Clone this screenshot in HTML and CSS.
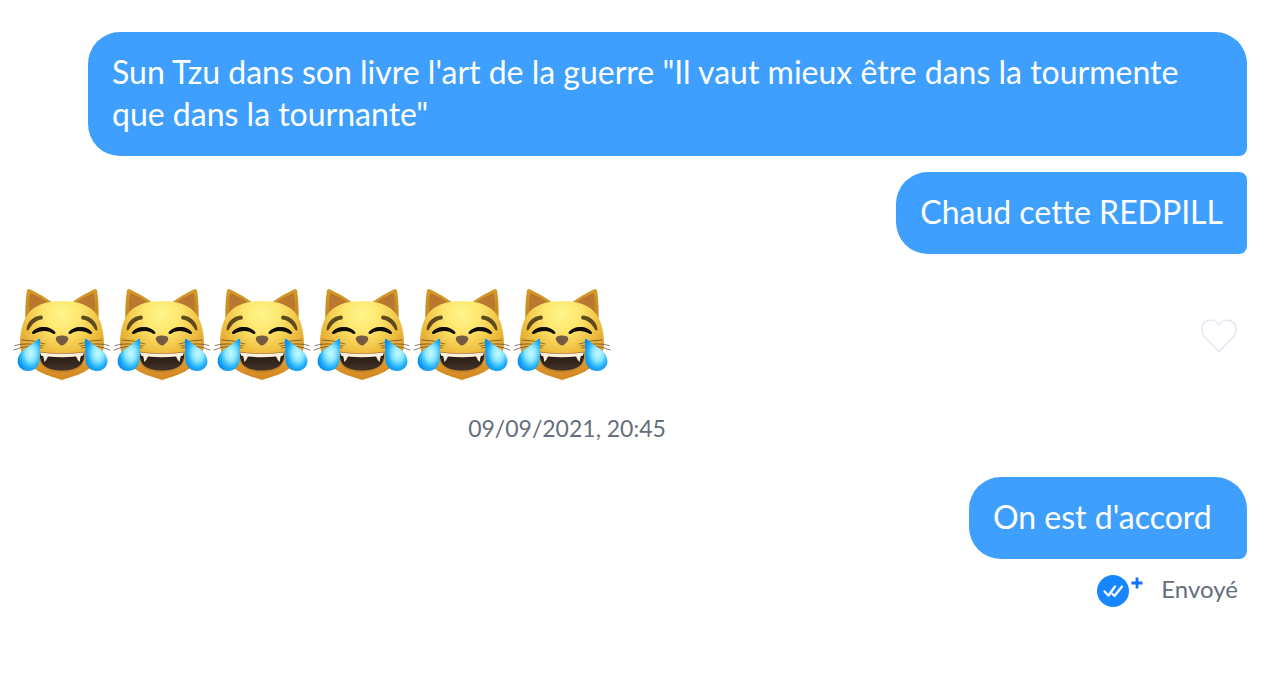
FILE: index.html
```html
<!DOCTYPE html>
<html lang="fr">
<head>
<meta charset="utf-8">
<meta name="viewport" content="width=device-width, initial-scale=1">
<title>Conversation</title>
<link rel="stylesheet" href="styles.css">
</head>
<body>
<svg class="sprite" aria-hidden="true">
  <defs>
    <radialGradient id="fur" gradientUnits="userSpaceOnUse" cx="50" cy="30" r="62">
      <stop offset="0" stop-color="#fff68c"/>
      <stop offset=".3" stop-color="#fde66c"/>
      <stop offset=".65" stop-color="#edba3c"/>
      <stop offset="1" stop-color="#d68a24"/>
    </radialGradient>
    <linearGradient id="ear" x1="0" y1="0" x2="0" y2="1">
      <stop offset="0" stop-color="#d39a28"/>
      <stop offset="1" stop-color="#c08420"/>
    </linearGradient>
    <radialGradient id="tear" cx=".58" cy=".45" r=".6">
      <stop offset="0" stop-color="#c8fbff"/>
      <stop offset=".4" stop-color="#8ae6ff"/>
      <stop offset=".75" stop-color="#22b0fa"/>
      <stop offset="1" stop-color="#0a90f2"/>
    </radialGradient>
    <linearGradient id="mouth" x1="0" y1="0" x2="0" y2="1">
      <stop offset="0" stop-color="#21170f"/>
      <stop offset="1" stop-color="#43332a"/>
    </linearGradient>
    <symbol id="cat" viewBox="0 0 100 100">
      <path fill="url(#ear)" d="M13.500 36C13 23 14 12 15 6.500Q15.500 4 18.500 5.500Q30 11 41 19L25 38ZM86.500 36C87 23 86 12 85 6.500Q84.500 4 81.500 5.500Q70 11 59 19L75 38Z"/>
      <path fill="#b97730" d="M18 34C16.500 22 17 13 18.500 9Q28 13 38 20L24 37ZM82 34C83.500 22 83 13 81.500 9Q72 13 62 20L76 37Z"/>
      <path fill="url(#fur)" d="M50 17C66 17 78 21 85 31C90 39 92 50 92 60C92 73 83 82 72 88C64 92 56 94 50 96C44 94 36 92 28 88C17 82 8 73 8 60C8 50 10 39 15 31C22 21 34 17 50 17Z"/>
      <path fill="#5d4b1e" d="M14.500 45.500C15 38 21 32 29.500 31.500Q32 33 30 35.500C24 36 20 40 17 45.500Q15 47.500 14.500 45.500ZM85.500 45.500C85 38 79 32 70.500 31.500Q68 33 70 35.500C76 36 80 40 83 45.500Q85 47.500 85.500 45.500Z"/>
      <path fill="#100d08" d="M20 48.500C24 41 39 41 43.500 48.500Q43.500 50.500 41.500 50C36 45.500 28 46.500 22 50Q19.500 50.500 20 48.500ZM56.500 48.500C61 41 76 41 80 48.500Q80.500 50.500 78 50C72 46.500 64 45.500 58.500 50Q56.500 50.500 56.500 48.500Z"/>
      <path fill="#765b42" d="M45 52.500Q50 50.500 55 52.500Q58 55 54 59Q51.500 61.500 50 61.500Q48.500 61.500 46 59Q42 55 45 52.500Z"/>
      <path fill="#c48426" d="M27 67.500Q50 71 73 67.500C74 84 64 88.500 50 88.500S26 84 27 67.500Z"/>
      <path fill="url(#mouth)" d="M28 68.500Q50 71 72 68.500C73 82 64 86.500 50 86.500S27 82 28 68.500Z"/>
      <path fill="#fff0dc" d="M28 68.500Q50 71 72 68.500L71 71.500L68.800 72.200L67.500 78Q65.500 76 64 72.500Q50 74 36 72.500Q34.500 76 32.500 78L31.200 72.200L29 71.500Z"/>
      <path fill="none" stroke="#57432a" stroke-width=".7" stroke-linecap="round" d="M33 60Q21 56 10 56M31 62Q15 58 3 61.500M30 64Q15 60 2 66M67 60Q79 56 90 56M69 62Q85 58 97 61.500M70 64Q85 60 98 66"/>
      <path fill="url(#tear)" d="M26.500 55Q28.300 54 28.200 57C27.500 64 28 70 27.500 77C26.500 83 22 87 16 87C9.500 87 4.800 82 5.700 76C6.500 69 12 65.500 16 63C20 60.500 23 57.500 26.500 55Z"/>
      <path fill="url(#tear)" d="M74.500 55Q72.700 54 72.800 57C73.500 64 73 70 73.500 77C74.500 83 79 87 85 87C91.500 87 96.200 82 95.300 76C94.500 69 89 65.500 85 63C81 60.500 78 57.500 74.500 55Z"/>
    </symbol>
  </defs>
</svg>

<main class="chat">
  <div class="message message--sent message--long">
    <p class="bubble bubble--first">Sun Tzu dans son livre l'art de la guerre "Il vaut mieux être dans la tourmente<br>que dans la tournante"</p>
  </div>
  <div class="message message--sent">
    <p class="bubble bubble--last">Chaud cette REDPILL</p>
  </div>
  <div class="message message--received">
    <div class="emojis" role="img" aria-label="Six chats qui pleurent de rire">
      <svg class="emoji"><use href="#cat"/></svg>
      <svg class="emoji"><use href="#cat"/></svg>
      <svg class="emoji"><use href="#cat"/></svg>
      <svg class="emoji"><use href="#cat"/></svg>
      <svg class="emoji"><use href="#cat"/></svg>
      <svg class="emoji"><use href="#cat"/></svg>
    </div>
    <button class="like" type="button" aria-label="Aimer le message">
      <svg class="like__icon" viewBox="0 0 36 36"><path fill="none" stroke="#e4e7f0" stroke-width="1.500" stroke-linejoin="round" d="M18 35.500L4 21.500C-1 16 .5 8 5 5.500C9 3 15 4 18 8.500C21 4 27 3 31 5.500C35.500 8 37 16 32 21.500Z"/></svg>
    </button>
  </div>
  <time class="date" datetime="2021-09-09T20:45">09/09/2021, 20:45</time>
  <div class="message message--sent">
    <p class="bubble bubble--first">On est d'accord</p>
  </div>
  <div class="status">
    <svg class="status__icon" viewBox="0 0 46 32" aria-hidden="true">
      <circle cx="16" cy="16" r="16" fill="#1786ff"/>
      <path fill="none" stroke="#fff" stroke-width="2.200" stroke-linecap="round" stroke-linejoin="round" d="M7.500 16.500L11.500 20.500L18 11.500M15.500 19L17.500 21L25 11.500"/>
      <path fill="none" stroke="#1174f5" stroke-width="2.800" d="M40 2.500V13.500M34.500 8H45.500"/>
    </svg>
    <span>Envoyé</span>
  </div>
</main>
</body>
</html>
```
FILE: styles.css
```css
* {
  box-sizing: border-box;
}

body {
  margin: 0;
  background: #fff;
  font-family: Lato, "Open Sans", sans-serif;
  font-variant-ligatures: none;
}

.sprite {
  position: absolute;
  width: 0;
  height: 0;
}

.chat {
  display: flex;
  flex-direction: column;
  gap: 16px;
  padding: 32px 31px 32px 12px;
}

.message {
  display: flex;
}

.message--sent {
  justify-content: flex-end;
  padding-left: 76px;
}

.message--long .bubble {
  flex: 1;
}

.message--received {
  align-items: center;
  justify-content: space-between;
  margin-top: 14px;
}

.bubble {
  min-width: 278px;
  margin: 0;
  padding: 19px 24px 21px;
  background: #3e9fff;
  color: #fff;
  font-size: 32px;
  line-height: 42px;
}

.bubble--first {
  border-radius: 32px 32px 8px 32px;
}

.bubble--last {
  border-radius: 32px 8px 8px 32px;
}

.emojis {
  display: flex;
}

.emoji {
  width: 100px;
  height: 100px;
}

.like {
  padding: 10px;
  border: 0;
  background: none;
  cursor: pointer;
}

.like__icon {
  display: block;
  width: 36px;
  height: 36px;
}

.date {
  margin: 12px 125px 17px 0;
  color: #656e7b;
  font-size: 23px;
  line-height: 32px;
  text-align: center;
}

.status {
  display: flex;
  align-items: flex-start;
  justify-content: flex-end;
  gap: 18px;
  padding-right: 9px;
  color: #656e7b;
  font-size: 24px;
  line-height: 28px;
}

.status__icon {
  width: 46px;
  height: 32px;
}
```
